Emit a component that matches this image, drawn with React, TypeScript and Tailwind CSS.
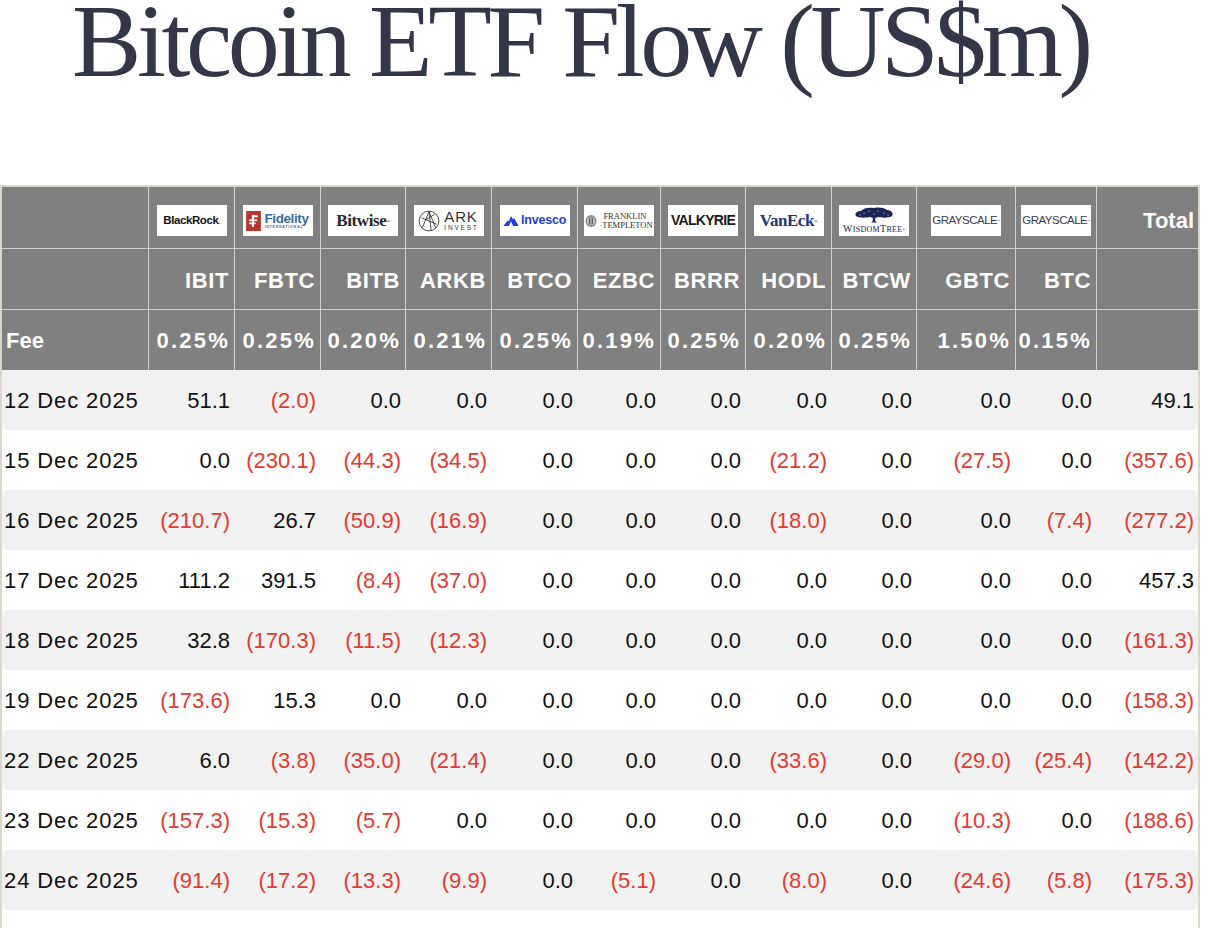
import type { ReactNode } from 'react'

const GRID =
  'grid grid-cols-[146px_86px_86px_85px_86px_86px_83px_85px_86px_85px_99px_81px_102px]'

const TICKERS = ['IBIT', 'FBTC', 'BITB', 'ARKB', 'BTCO', 'EZBC', 'BRRR', 'HODL', 'BTCW', 'GBTC', 'BTC']
const FEES = ['0.25%', '0.25%', '0.20%', '0.21%', '0.25%', '0.19%', '0.25%', '0.20%', '0.25%', '1.50%', '0.15%']

const ROWS: [string, number[]][] = [
  ['12 Dec 2025', [51.1, -2.0, 0, 0, 0, 0, 0, 0, 0, 0, 0, 49.1]],
  ['15 Dec 2025', [0, -230.1, -44.3, -34.5, 0, 0, 0, -21.2, 0, -27.5, 0, -357.6]],
  ['16 Dec 2025', [-210.7, 26.7, -50.9, -16.9, 0, 0, 0, -18.0, 0, 0, -7.4, -277.2]],
  ['17 Dec 2025', [111.2, 391.5, -8.4, -37.0, 0, 0, 0, 0, 0, 0, 0, 457.3]],
  ['18 Dec 2025', [32.8, -170.3, -11.5, -12.3, 0, 0, 0, 0, 0, 0, 0, -161.3]],
  ['19 Dec 2025', [-173.6, 15.3, 0, 0, 0, 0, 0, 0, 0, 0, 0, -158.3]],
  ['22 Dec 2025', [6.0, -3.8, -35.0, -21.4, 0, 0, 0, -33.6, 0, -29.0, -25.4, -142.2]],
  ['23 Dec 2025', [-157.3, -15.3, -5.7, 0, 0, 0, 0, 0, 0, -10.3, 0, -188.6]],
  ['24 Dec 2025', [-91.4, -17.2, -13.3, -9.9, 0, -5.1, 0, -8.0, 0, -24.6, -5.8, -175.3]],
]

function LogoBox({ children }: { children: ReactNode }) {
  return (
    <div className="flex h-[31px] w-[70px] items-center justify-center overflow-hidden bg-white">
      {children}
    </div>
  )
}

function BlackRock() {
  return (
    <LogoBox>
      <span className="font-['Liberation_Sans',sans-serif] text-[11.5px] font-bold tracking-[-0.4px] text-[#111]">
        BlackRock<span className="text-[6px]">.</span>
      </span>
    </LogoBox>
  )
}

function Fidelity() {
  return (
    <LogoBox>
      <div className="flex items-center gap-[3px]">
        <svg width="15" height="20" viewBox="0 0 14 19">
          <rect width="14" height="19" fill="#b8362f" />
          <rect x="5.5" y="4" width="2" height="11" fill="#fff" />
          <rect x="5.5" y="4" width="5.5" height="2" fill="#fff" />
          <rect x="3" y="8" width="7.5" height="1.6" fill="#fff" />
          <rect x="3" y="11" width="6" height="1.6" fill="#fff" />
        </svg>
        <div className="flex flex-col items-start leading-none">
          <span className="font-['Liberation_Sans',sans-serif] text-[13.5px] font-bold tracking-[-0.4px] text-[#3a6c9e]">
            Fidelity
          </span>
          <span className="mt-[1px] font-['Liberation_Sans',sans-serif] text-[3.5px] font-bold tracking-[0.8px] text-[#3a6c9e]">
            INTERNATIONAL
          </span>
        </div>
      </div>
    </LogoBox>
  )
}

function Bitwise() {
  return (
    <LogoBox>
      <span className="font-['Liberation_Serif',serif] text-[17px] font-bold tracking-[-0.4px] text-[#2a2a2a]">
        Bitwise<sup className="text-[5px]">®</sup>
      </span>
    </LogoBox>
  )
}

function Ark() {
  return (
    <LogoBox>
      <div className="flex items-center gap-[4px]">
        <svg width="22" height="22" viewBox="0 0 20 20" fill="none" stroke="#333" strokeWidth="0.8">
          <circle cx="10" cy="10" r="9" />
          <path d="M4 16 L10 1.5 L16 16" />
          <path d="M7 9 L15 4 M10 1.5 L12 19 M3 7 L17 13" />
        </svg>
        <div className="flex flex-col items-start leading-none text-[#333]">
          <span className="font-['Liberation_Sans',sans-serif] text-[15px] tracking-[0.8px]">ARK</span>
          <span className="mt-[1px] font-['Liberation_Sans',sans-serif] text-[6.5px] tracking-[1.8px]">INVEST</span>
        </div>
      </div>
    </LogoBox>
  )
}

function Invesco() {
  return (
    <LogoBox>
      <div className="flex items-center gap-[2px]">
        <svg width="16" height="11" viewBox="0 0 14 10">
          <path d="M0 10 L4 5 L5 6 L7 1 L9 4 L10 3 L14 10 Z" fill="#1f3fd6" />
          <path d="M5 10 L7 6 L9 10 Z" fill="#fff" />
        </svg>
        <span className="font-['Liberation_Sans',sans-serif] text-[12.5px] font-bold tracking-[-0.2px] text-[#1f3fd6]">
          Invesco
        </span>
      </div>
    </LogoBox>
  )
}

function Franklin() {
  return (
    <LogoBox>
      <div className="flex items-center gap-[2px]">
        <svg width="12" height="14" viewBox="0 0 11 12">
          <ellipse cx="5.5" cy="6" rx="5" ry="5.5" fill="#8a8a8a" />
          <ellipse cx="5.5" cy="6" rx="3.5" ry="4" fill="#d6d6d6" />
          <rect x="3.5" y="3" width="1" height="6" fill="#555" />
          <rect x="6.5" y="3" width="1" height="6" fill="#555" />
          <rect x="5" y="2" width="1" height="8" fill="#777" />
        </svg>
        <div className="flex flex-col items-start font-['Liberation_Serif',serif] text-[8.5px] leading-[9px] text-[#333]">
          <span className="pl-[4px]">FRANKLIN</span>
          <span>·TEMPLETON</span>
        </div>
      </div>
    </LogoBox>
  )
}

function Valkyrie() {
  return (
    <LogoBox>
      <span className="inline-block font-['Liberation_Sans',sans-serif] text-[14px] font-bold tracking-[-0.7px] text-[#1a1a1a]">
        VALKYRIE
      </span>
    </LogoBox>
  )
}

function VanEck() {
  return (
    <LogoBox>
      <span className="font-['Liberation_Serif',serif] text-[17px] font-bold tracking-[-0.5px] text-[#1d3a7c]">
        VanEck<sup className="text-[5px]">®</sup>
      </span>
    </LogoBox>
  )
}

function WisdomTree() {
  return (
    <LogoBox>
      <div className="flex flex-col items-center leading-none">
        <svg width="42" height="16" viewBox="0 0 40 16">
          <path
            d="M2 9 C0 6 4 4 7 4 C9 1 15 0 20 1 C25 0 31 1 33 3 C37 3 40 6 38 9 C36 11 28 11 24 10 L21.2 11 L21.2 14 L23 15.5 L17 15.5 L18.8 14 L18.8 11 L16 10 C12 11 4 11 2 9 Z"
            fill="#1b2456"
          />
          <circle cx="10" cy="6" r="0.6" fill="#fff" />
          <circle cx="15" cy="4" r="0.6" fill="#fff" />
          <circle cx="24" cy="4" r="0.6" fill="#fff" />
          <circle cx="30" cy="6" r="0.6" fill="#fff" />
          <circle cx="20" cy="7" r="0.6" fill="#fff" />
          <circle cx="6" cy="8" r="0.6" fill="#fff" />
          <circle cx="34" cy="8" r="0.6" fill="#fff" />
        </svg>
        <span className="mt-[1px] font-['Liberation_Serif',serif] text-[10px] tracking-[0.3px] text-[#1b2456]">
          W<span className="text-[8px]">ISDOM</span>T<span className="text-[8px]">REE</span>
          <sup className="text-[3px]">®</sup>
        </span>
      </div>
    </LogoBox>
  )
}

function Grayscale() {
  return (
    <LogoBox>
      <span className="font-['Liberation_Sans',sans-serif] text-[11.5px] tracking-[-0.5px] text-[#3a3a4c]">
        GRAYSCALE<sup className="text-[3px]">™</sup>
      </span>
    </LogoBox>
  )
}

const LOGOS = [BlackRock, Fidelity, Bitwise, Ark, Invesco, Franklin, Valkyrie, VanEck, WisdomTree, Grayscale, Grayscale]

function fmt(v: number) {
  if (v < 0) return <span className="text-[#e6392f]">({Math.abs(v).toFixed(1)})</span>
  return <span>{v.toFixed(1)}</span>
}

export default function App() {
  return (
    <div className="min-h-screen bg-white">
      <h1 className="-mt-[11px] whitespace-nowrap pl-[72px] font-['Liberation_Serif',serif] text-[104px] leading-none tracking-[-4.4px] text-[#333548]">
        Bitcoin ETF Flow (US$m)
      </h1>

      <div className="mt-[92px] w-[1200px] border-2 border-b-0 border-[#d9d6ca] font-['Liberation_Sans',sans-serif] text-[22px] text-[#111]">
        {/* logo row */}
        <div className={`${GRID} h-[62px] border-b border-[#cfcfcf] bg-[#808080]`}>
          <div />
          {LOGOS.map((Logo, i) => (
            <div key={i} className="flex items-center justify-center border-l border-[#cfcfcf] pt-[6px]">
              <Logo />
            </div>
          ))}
          <div className="flex items-center justify-end border-l border-[#cfcfcf] pr-1 pt-[5px] font-bold text-white">
            Total
          </div>
        </div>

        {/* ticker row */}
        <div className={`${GRID} h-[61px] border-b border-[#cfcfcf] bg-[#808080] font-bold text-white`}>
          <div />
          {TICKERS.map((t) => (
            <div key={t} className="flex items-center justify-end border-l border-[#cfcfcf] pr-[5px] pt-[3px] tracking-[0.6px]">
              {t}
            </div>
          ))}
          <div className="border-l border-[#cfcfcf]" />
        </div>

        {/* fee row */}
        <div className={`${GRID} h-[60px] bg-[#808080] font-bold text-white`}>
          <div className="flex items-center pl-1">Fee</div>
          {FEES.map((f, i) => (
            <div key={i} className="flex items-center justify-end border-l border-[#cfcfcf] pr-[4px] tracking-[2.2px]">
              {f}
            </div>
          ))}
          <div className="border-l border-[#cfcfcf]" />
        </div>

        {ROWS.map(([date, vals], r) => (
          <div key={date} className={`${GRID} h-[60px] items-center ${r % 2 === 0 ? 'bg-[#f2f2f2]' : 'bg-white'}`}>
            <div className="pl-[2px] tracking-[0.9px]">{date}</div>
            {vals.map((v, i) => (
              <div key={i} className="pr-1 text-right">
                {fmt(v)}
              </div>
            ))}
          </div>
        ))}
        <div className="h-[60px] bg-white" />
      </div>
    </div>
  )
}
